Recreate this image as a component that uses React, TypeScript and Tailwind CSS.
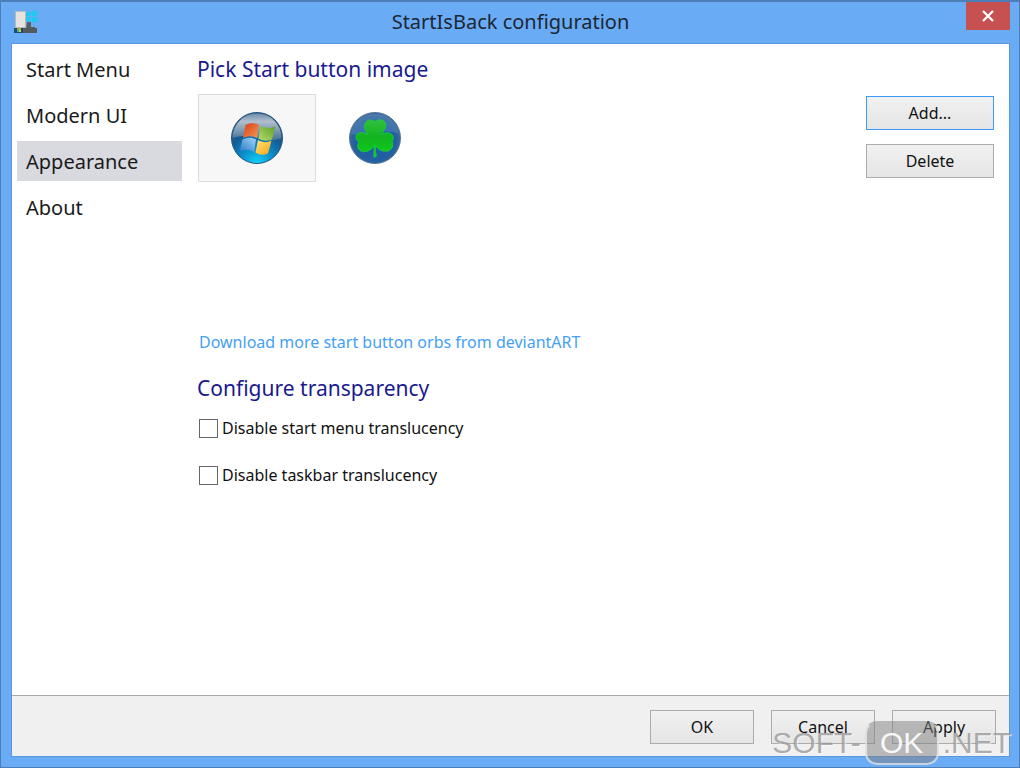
import { useState } from "react";

const navItems = ["Start Menu", "Modern UI", "Appearance", "About"];

function AppIcon() {
  return (
    <svg width="24" height="24" viewBox="0 0 24 24" aria-hidden="true">
      <path d="M12 2l5-.5v4.500h-5zM18 1.500l5-1v5.500h-5zM12 7h5v5l-5-1zM18 7h5v5.500l-5-.5z" fill="#1fc8f2" />
      <path d="M13 12h4v5h4v2h-9z" fill="#5b5f63" />
      <rect x="1.500" y="1.500" width="10" height="16" fill="#e6e2de" stroke="#b9b9b9" />
      <rect x="0" y="18" width="23" height="5" fill="#55585c" />
      <rect x="0" y="18" width="9" height="5" fill="#14506f" />
      <rect x="3" y="18" width="2" height="2" fill="#e0862a" />
      <rect x="5" y="18" width="2" height="2" fill="#7cc142" />
      <rect x="3" y="20" width="2" height="2" fill="#2aa5e0" />
      <rect x="5" y="20" width="2" height="2" fill="#f0c93a" />
    </svg>
  );
}

function WindowsOrb() {
  return (
    <svg width="54" height="54" viewBox="0 0 54 54" aria-hidden="true">
      <defs>
        <radialGradient id="orbBase" cx="0.5" cy="1" r="0.85">
          <stop offset="0" stopColor="#12d4fb" />
          <stop offset="0.35" stopColor="#0b93cf" />
          <stop offset="0.7" stopColor="#125c94" />
          <stop offset="1" stopColor="#2c5c86" />
        </radialGradient>
        <linearGradient id="orbGloss" x1="0" y1="0" x2="0" y2="1">
          <stop offset="0" stopColor="#6d8ca8" />
          <stop offset="0.3" stopColor="#b0bfce" />
          <stop offset="1" stopColor="#456f95" />
        </linearGradient>
        <linearGradient id="paneRed" x1="0" y1="0" x2="1" y2="1">
          <stop offset="0" stopColor="#d83d12" />
          <stop offset="1" stopColor="#f39a59" />
        </linearGradient>
        <linearGradient id="paneGreen" x1="1" y1="0" x2="0" y2="1">
          <stop offset="0" stopColor="#5e9e28" />
          <stop offset="1" stopColor="#b5dc70" />
        </linearGradient>
        <linearGradient id="paneBlue" x1="0" y1="1" x2="1" y2="0">
          <stop offset="0" stopColor="#2677c8" />
          <stop offset="1" stopColor="#a5d5f3" />
        </linearGradient>
        <linearGradient id="paneYellow" x1="1" y1="1" x2="0" y2="0">
          <stop offset="0" stopColor="#f5a313" />
          <stop offset="1" stopColor="#ffe57a" />
        </linearGradient>
      </defs>
      <circle cx="27" cy="27" r="25.5" fill="url(#orbBase)" stroke="#28577b" />
      <path d="M2.500 27A24.500 24.500 0 0 1 51.500 27C43 31 34 29 27 27S12 24 2.500 27z" fill="url(#orbGloss)" />
      <path d="M15.500 14c4.500-2.500 9-2.500 13.500 0l-2 13c-4-2.500-9-2.500-14 0z" fill="url(#paneRed)" />
      <path d="M30.500 15c5 2.500 10 2.500 15 .5l-3.500 13c-5 2-9 1.500-13.500-1z" fill="url(#paneGreen)" />
      <path d="M12.500 28.500c5-2.500 9.500-2.500 13.500 0l-2 12.500c-4-2.500-9-2.500-14.500-.5z" fill="url(#paneBlue)" />
      <path d="M28 29c4.500 2.500 9 3 13.500.5l-3.500 13c-5 2-8.500 1.500-12.500-1z" fill="url(#paneYellow)" />
    </svg>
  );
}

function CloverOrb() {
  return (
    <svg width="54" height="54" viewBox="0 0 54 54" aria-hidden="true">
      <defs>
        <radialGradient id="cloverBase" cx="0.5" cy="0.55" r="0.5">
          <stop offset="0" stopColor="#1b5da6" />
          <stop offset="0.8" stopColor="#225fa2" />
          <stop offset="1" stopColor="#3a6795" />
        </radialGradient>
        <linearGradient id="cloverLeaf" x1="0" y1="0" x2="0" y2="1">
          <stop offset="0" stopColor="#33c13f" />
          <stop offset="0.45" stopColor="#13b31f" />
          <stop offset="1" stopColor="#0fd01c" />
        </linearGradient>
      </defs>
      <circle cx="27" cy="27" r="25.500" fill="url(#cloverBase)" stroke="#527a9f" />
      <path d="M3 23C7-4 47-4 51 23C36 16 18 26 3 23z" fill="#6f9bc9" opacity="0.35" />
      <path
        d="M27 10.500C31 7 38 9 38 14C38 18 35 20 34 23.500C38 21 43 21 45 25C46 27 45 29 44 30C46 34 44 39 40 40C35 41 30 39 27.500 34.500Q26.500 40 28.500 45L26 46.500Q25.500 40 26.500 34.500C23 40 17 42 13 40C9 38 9 34 11 31C7 29 7 23 11 22C15 21 18 22 20 24C18 20 15 17 17 12.500C19 8 24 8.500 27 10.500z"
        fill="url(#cloverLeaf)"
        stroke="#19cf3b"
        strokeWidth="0.8"
      />
    </svg>
  );
}

const orbs = [
  { name: "Windows orb", Icon: WindowsOrb },
  { name: "Clover orb", Icon: CloverOrb },
];

const buttonBase =
  "h-[34px] border bg-linear-to-b from-[#f1f1f1] to-[#e5e5e5] bg-origin-border pb-px text-[16px] leading-6 text-[#111]";

function CheckRow({ label }: { label: string }) {
  return (
    <label className="flex h-6 w-fit items-center gap-1 text-[16px] leading-6 text-[#111]">
      <input
        type="checkbox"
        className="size-[19px] appearance-none border border-[#666] bg-white checked:bg-[#3c9bf5]"
      />
      {label}
    </label>
  );
}

function Watermark() {
  return (
    <div className="pointer-events-none absolute right-2 bottom-[2px] flex h-[44px] items-center font-['Liberation_Sans',sans-serif] text-[30px] leading-10 text-[#8b8b8b]/70 [text-shadow:1px_1px_0_rgba(255,255,255,0.6)]">
      <span>SOFT-</span>
      <span className="mx-1 flex h-[44px] w-[74px] items-center justify-center rounded-xl border-2 border-white/60 border-t-transparent bg-[#808080]/50 text-white/90 [text-shadow:none]">
        OK
      </span>
      <span>.NET</span>
    </div>
  );
}

export default function App() {
  const [page, setPage] = useState("Appearance");
  const [orb, setOrb] = useState("Windows orb");

  return (
    <div className="relative flex min-h-screen flex-col border border-t-2 border-[#4c7fb9] bg-[#6aabf5] pr-[9px] pb-[10px] pl-[10px] font-['Noto_Sans','Open_Sans',sans-serif]">
      <header className="grid h-[41px] grid-cols-[44px_1fr_44px]">
        <div className="pt-2 pl-[3px]">
          <AppIcon />
        </div>
        <h1 className="pt-[6px] text-center text-[20px] leading-7 text-[#1d2733]">StartIsBack configuration</h1>
        <button aria-label="Close" className="flex h-7 items-center justify-center bg-[#c75050]">
          <svg width="12" height="12" viewBox="0 0 12 12" aria-hidden="true">
            <path d="M1 1l10 10M11 1L1 11" stroke="#fff" strokeWidth="2.2" />
          </svg>
        </button>
      </header>

      <div className="flex flex-1 flex-col border border-[#5a97dc] bg-white">
        <div className="flex flex-1">
          <nav className="flex w-[170px] flex-col gap-[6px] pt-[5px] pl-[5px]">
            {navItems.map((item) => (
              <button
                key={item}
                onClick={() => setPage(item)}
                className={`h-10 pt-[2px] pl-[9px] text-left text-[20px] leading-7 text-[#1a1a1a] ${
                  page === item ? "bg-[#d9dae0]" : ""
                }`}
              >
                {item}
              </button>
            ))}
          </nav>

          <main className="flex-1 pr-[15px] pl-[15px]">
            <h2 className="pt-[9px] text-[21px] leading-8 text-[#1a1a8f]">Pick Start button image</h2>
            <div className="mt-[9px] flex h-[232px] justify-between">
              <div className="flex pl-px">
                {orbs.map(({ name, Icon }) => (
                  <button
                    key={name}
                    aria-label={name}
                    onClick={() => setOrb(name)}
                    className={`flex h-[88px] w-[118px] items-center justify-center border ${
                      orb === name ? "border-[#dcdcdc] bg-[#f7f7f7]" : "border-transparent"
                    }`}
                  >
                    <Icon />
                  </button>
                ))}
              </div>
              <div className="flex w-32 flex-col gap-[14px] pt-[2px]">
                <button className={`${buttonBase} border-[#3c9bf5]`}>Add...</button>
                <button className={`${buttonBase} border-[#acacac]`}>Delete</button>
              </div>
            </div>
            <a href="#orbs" className="ml-[2px] block w-fit pt-1 text-[16px] leading-6 text-[#459ff5]">
              Download more start button orbs from deviantART
            </a>
            <h2 className="mt-[18px] text-[21px] leading-8 text-[#1a1a8f]">Configure transparency</h2>
            <div className="mt-3 ml-[2px] flex flex-col gap-[23px]">
              <CheckRow label="Disable start menu translucency" />
              <CheckRow label="Disable taskbar translucency" />
            </div>
          </main>
        </div>

        <footer className="flex h-[61px] justify-end gap-[17px] border-t border-[#a9a9a9] bg-[#f0f0f0] pt-[14px] pr-[13px]">
          <button className={`${buttonBase} w-[104px] border-[#acacac]`}>OK</button>
          <button className={`${buttonBase} w-[104px] border-[#acacac]`}>Cancel</button>
          <button className={`${buttonBase} w-[104px] border-[#acacac]`}>Apply</button>
        </footer>
      </div>
      <Watermark />
    </div>
  );
}
